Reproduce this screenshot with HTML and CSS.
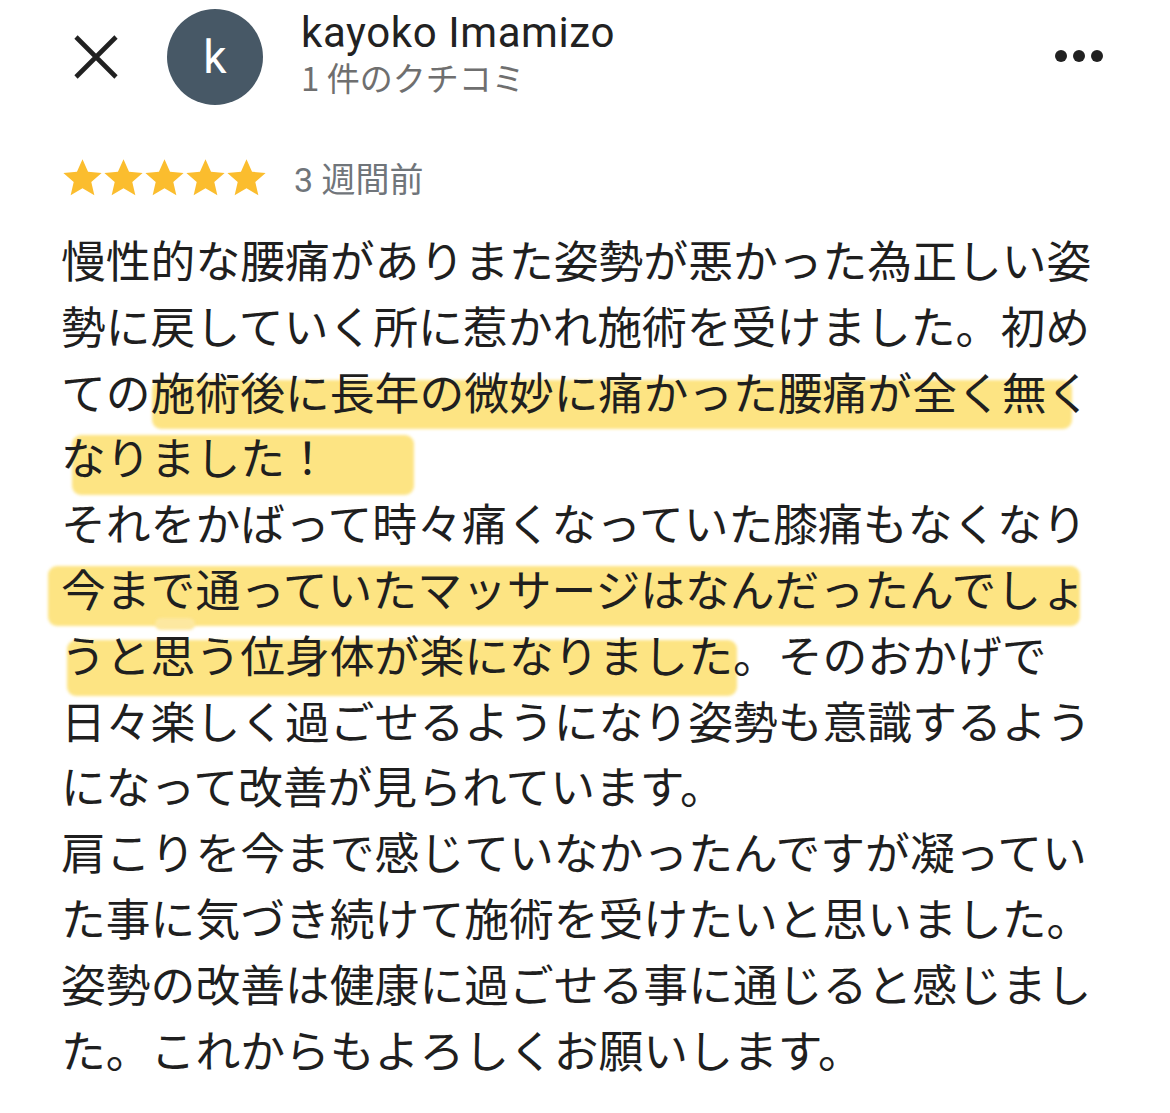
FILE: index.html
```html
<!DOCTYPE html>
<html lang="ja">
<head>
    <meta charset="utf-8" />
    <meta name="viewport" content="width=device-width, initial-scale=1.0" />
    <title>kayoko Imamizo のクチコミ</title>
    <link rel="stylesheet" href="styles.css">
</head>
<body>
    <div class="review">
        <header class="review-head">
            <button class="close-btn" aria-label="閉じる">
                <svg width="46" height="46" viewBox="0 0 46 46">
                    <path d="M3 3 L43 43 M43 3 L3 43" stroke="#212121" stroke-width="4.6" stroke-linecap="butt" fill="none" />
                </svg>
            </button>
            <div class="avatar">k</div>
            <div class="author">
                <div class="author-name">kayoko Imamizo</div>
                <div class="author-count">1 件のクチコミ</div>
            </div>
            <button class="more-btn" aria-label="その他">
                <span></span><span></span><span></span>
            </button>
        </header>

        <div class="review-meta">
            <div class="stars">
                <svg viewBox="1.8 2.2 20.4 19.2"><path d="M12 2.2l2.9 6.6 7.1.6-5.4 4.7 1.6 7-6.2-3.7-6.2 3.7 1.6-7-5.4-4.7 7.1-.6z" /></svg>
                <svg viewBox="1.8 2.2 20.4 19.2"><path d="M12 2.2l2.9 6.6 7.1.6-5.4 4.7 1.6 7-6.2-3.7-6.2 3.7 1.6-7-5.4-4.7 7.1-.6z" /></svg>
                <svg viewBox="1.8 2.2 20.4 19.2"><path d="M12 2.2l2.9 6.6 7.1.6-5.4 4.7 1.6 7-6.2-3.7-6.2 3.7 1.6-7-5.4-4.7 7.1-.6z" /></svg>
                <svg viewBox="1.8 2.2 20.4 19.2"><path d="M12 2.2l2.9 6.6 7.1.6-5.4 4.7 1.6 7-6.2-3.7-6.2 3.7 1.6-7-5.4-4.7 7.1-.6z" /></svg>
                <svg viewBox="1.8 2.2 20.4 19.2"><path d="M12 2.2l2.9 6.6 7.1.6-5.4 4.7 1.6 7-6.2-3.7-6.2 3.7 1.6-7-5.4-4.7 7.1-.6z" /></svg>
            </div>
            <span class="review-date">3 週間前</span>
        </div>

        <p class="review-text">慢性的な腰痛がありまた姿勢が悪かった為正しい姿<br>勢に戻していく所に惹かれ施術を受けました。初め<br>ての<span class="hl hl-a">施術後に長年の微妙に痛かった腰痛が全く無く</span><br><span class="hl hl-b">なりました！</span><br>それをかばって時々痛くなっていた膝痛もなくなり<br><span class="hl hl-c">今まで通っていたマッサージはなんだったんでしょ</span><br><span class="hl hl-d">うと思う位身体が楽になりました</span>。そのおかげで<br>日々楽しく過ごせるようになり姿勢も意識するよう<br>になって改善が見られています。<br>肩こりを今まで感じていなかったんですが凝ってい<br>た事に気づき続けて施術を受けたいと思いました。<br>姿勢の改善は健康に過ごせる事に通じると感じまし<br>た。これからもよろしくお願いします。</p>
    </div>
</body>
</html>
```

FILE: styles.css
```css
html, body {
    background: #ffffff;
}

body {
    margin: 0;
    font-family: Roboto, "Noto Sans CJK JP", sans-serif;
    color: #1f1f1f;
}

.review {
    width: 1170px;
}

.review-head {
    display: flex;
    align-items: center;
    padding: 9px 67px 0 73px;
}

.close-btn {
    border: none;
    background: none;
    padding: 0;
    width: 46px;
    height: 46px;
    display: flex;
    margin-right: 48px;
}

.avatar {
    width: 96px;
    height: 96px;
    border-radius: 50%;
    background: #475866;
    color: #ffffff;
    font-size: 46px;
    display: flex;
    align-items: center;
    justify-content: center;
    margin-right: 38px;
}

.author {
    flex: 1;
}

.author-name {
    font-size: 42px;
    letter-spacing: 0.6px;
    line-height: 46px;
    color: #222222;
    margin-top: -6px;
}

.author-count {
    font-size: 33px;
    line-height: 42px;
    color: #6f6f6f;
    font-family: "Noto Sans CJK JP", sans-serif;
}

.more-btn {
    border: none;
    background: none;
    padding: 0;
    display: flex;
    gap: 6px;
    margin-top: -2px;
}

.more-btn span {
    width: 12px;
    height: 12px;
    border-radius: 50%;
    background: #212121;
}

.review-meta {
    display: flex;
    align-items: center;
    padding-left: 63px;
    margin-top: 48px;
}

.stars {
    display: flex;
    gap: 2px;
}

.stars svg {
    width: 39px;
    height: 37px;
    fill: #fbbd2e;
}

.review-date {
    margin-left: 28px;
    font-size: 34px;
    color: #70757a;
    font-family: Roboto, "Noto Sans CJK JP", sans-serif;
}

.review-text {
    margin: 24px 0 0;
    padding-left: 61px;
    font-family: "Noto Sans CJK JP", sans-serif;
    font-size: 44.8px;
    line-height: 65.8px;
    color: #1f1f1f;
    isolation: isolate;
}

.hl {
    position: relative;
}

.hl::before {
    content: "";
    position: absolute;
    z-index: -1;
    background: #fde483;
    border-radius: 9px;
    filter: blur(1.5px);
}

.hl-a::before {
    top: 22px;
    bottom: -6px;
    left: 1px;
    right: 19px;
}

.hl-b::before {
    top: 12px;
    bottom: -7px;
    left: 11px;
    right: -84px;
}

.hl-c::before {
    top: 11px;
    bottom: -6px;
    left: -13px;
    right: 6px;
}

.hl-c::after {
    content: "";
    position: absolute;
    z-index: -1;
    left: 94px;
    width: 40px;
    bottom: -10px;
    height: 12px;
    border-radius: 6px;
    background: #fde8a0;
    filter: blur(1.5px);
}

.hl-d::before {
    top: 19px;
    bottom: -10px;
    left: 6px;
    right: -4px;
}
```
